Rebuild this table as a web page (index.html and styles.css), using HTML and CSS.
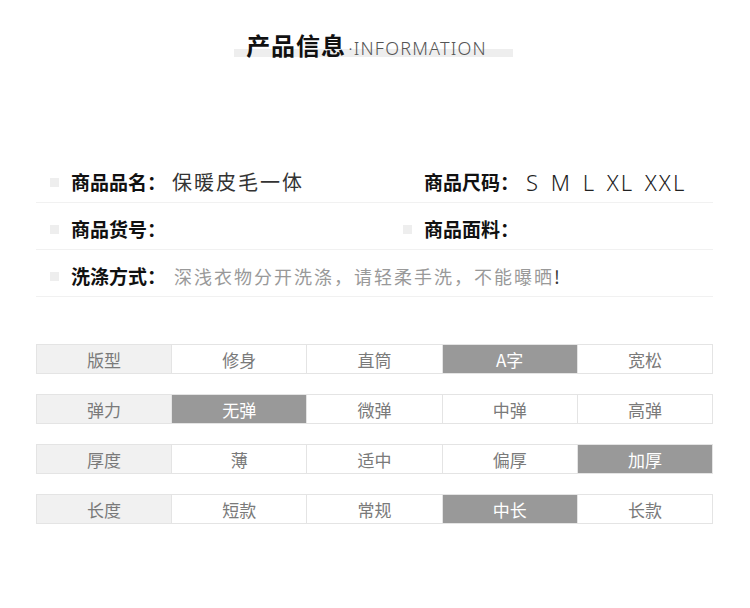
FILE: index.html
```html
<!DOCTYPE html>
<html lang="zh-CN">
<head>
<meta charset="utf-8">
<title>产品信息</title>
<link rel="stylesheet" href="styles.css">
</head>
<body>
<div class="page">
  <header class="head">
    <div class="head-inner">
      <span class="head-bar"></span>
      <h1 class="head-cn">产品信息</h1>
      <span class="head-en">·INFORMATION</span>
    </div>
  </header>

  <section class="info">
    <div class="info-row">
      <div class="info-cell cell-left">
        <span class="mark"></span>
        <span class="label">商品品名：</span>
        <span class="value">保暖皮毛一体</span>
      </div>
      <div class="info-cell cell-right">
        <span class="mark mark-hidden"></span>
        <span class="label">商品尺码：</span>
        <span class="value value-size">S M L XL XXL</span>
      </div>
    </div>
    <div class="info-row">
      <div class="info-cell cell-left">
        <span class="mark"></span>
        <span class="label">商品货号：</span>
      </div>
      <div class="info-cell cell-right">
        <span class="mark"></span>
        <span class="label">商品面料：</span>
      </div>
    </div>
    <div class="info-row">
      <div class="info-cell cell-full">
        <span class="mark"></span>
        <span class="label">洗涤方式：</span>
        <span class="value value-wash">深浅衣物分开洗涤，请轻柔手洗，不能曝晒<span class="bang">!</span></span>
      </div>
    </div>
  </section>

  <section class="specs">
    <div class="spec-row">
      <div class="spec-cell spec-head">版型</div>
      <div class="spec-cell">修身</div>
      <div class="spec-cell">直筒</div>
      <div class="spec-cell spec-on">A字</div>
      <div class="spec-cell">宽松</div>
    </div>
    <div class="spec-row">
      <div class="spec-cell spec-head">弹力</div>
      <div class="spec-cell spec-on">无弹</div>
      <div class="spec-cell">微弹</div>
      <div class="spec-cell">中弹</div>
      <div class="spec-cell">高弹</div>
    </div>
    <div class="spec-row">
      <div class="spec-cell spec-head">厚度</div>
      <div class="spec-cell">薄</div>
      <div class="spec-cell">适中</div>
      <div class="spec-cell">偏厚</div>
      <div class="spec-cell spec-on">加厚</div>
    </div>
    <div class="spec-row">
      <div class="spec-cell spec-head">长度</div>
      <div class="spec-cell">短款</div>
      <div class="spec-cell">常规</div>
      <div class="spec-cell spec-on">中长</div>
      <div class="spec-cell">长款</div>
    </div>
  </section>
</div>
</body>
</html>
```

FILE: styles.css
```css
* {
  box-sizing: border-box;
}

html, body {
  margin: 0;
  padding: 0;
  background: #ffffff;
}

body {
  font-family: "Noto Sans CJK SC", "Noto Sans", sans-serif;
  color: #222;
}

.page {
  width: 750px;
  height: 608px;
  padding: 0 37px 0 36px;
}

/* header */
.head {
  display: flex;
  justify-content: center;
  padding-top: 29px;
}

.head-inner {
  position: relative;
  display: flex;
  align-items: baseline;
  padding: 0 26px 0 12px;
  margin-left: -2px;
}

.head-bar {
  position: absolute;
  left: 0;
  right: 0;
  top: 20px;
  height: 8px;
  background: #eeeeee;
}

.head-cn {
  position: relative;
  margin: 0;
  font-size: 24px;
  line-height: 32px;
  font-weight: 700;
  letter-spacing: 1px;
  color: #111;
}

.head-en {
  position: relative;
  margin-left: 2px;
  font-family: "Noto Sans", sans-serif;
  font-weight: 300;
  font-size: 18px;
  letter-spacing: 1.2px;
  color: #555;
}

/* info */
.info {
  margin-top: 95px;
}

.info-row {
  display: grid;
  grid-template-columns: 353px 1fr;
  border-bottom: 1px solid #f1f1f1;
  height: 47px;
}

.info-cell {
  display: flex;
  align-items: center;
  padding: 14px 0 8px 14px;
  line-height: 24px;
}

.cell-full {
  grid-column: 1 / 3;
}

.mark {
  width: 9px;
  height: 9px;
  background: #eeeeee;
  margin-right: 12px;
  flex: none;
}

.mark-hidden {
  visibility: hidden;
}

.label {
  font-size: 19px;
  font-weight: 700;
  color: #111;
}

.value {
  font-size: 20px;
  letter-spacing: 2px;
  color: #333;
  margin-left: 6px;
}

.value-size {
  font-family: "Noto Sans", sans-serif;
  font-weight: 300;
  font-size: 22px;
  letter-spacing: 2px;
  word-spacing: 3px;
  color: #222;
  margin-left: 7px;
}

.value-wash {
  font-size: 18px;
  letter-spacing: 2px;
  color: #999;
  margin-left: 8px;
}

.bang {
  color: #333;
}

/* specs table */
.specs {
  margin-top: 47px;
  display: flex;
  flex-direction: column;
  gap: 20px;
}

.spec-row {
  display: grid;
  grid-template-columns: repeat(5, 1fr);
  height: 30px;
  border: 1px solid #e4e4e4;
  border-left: none;
}

.spec-cell {
  display: flex;
  align-items: center;
  justify-content: center;
  border-left: 1px solid #e4e4e4;
  font-size: 17px;
  color: #7a7a7a;
  background: #fff;
}

.spec-head {
  background: #f1f1f1;
}

.spec-on {
  background: #999999;
  color: #ffffff;
}
```
